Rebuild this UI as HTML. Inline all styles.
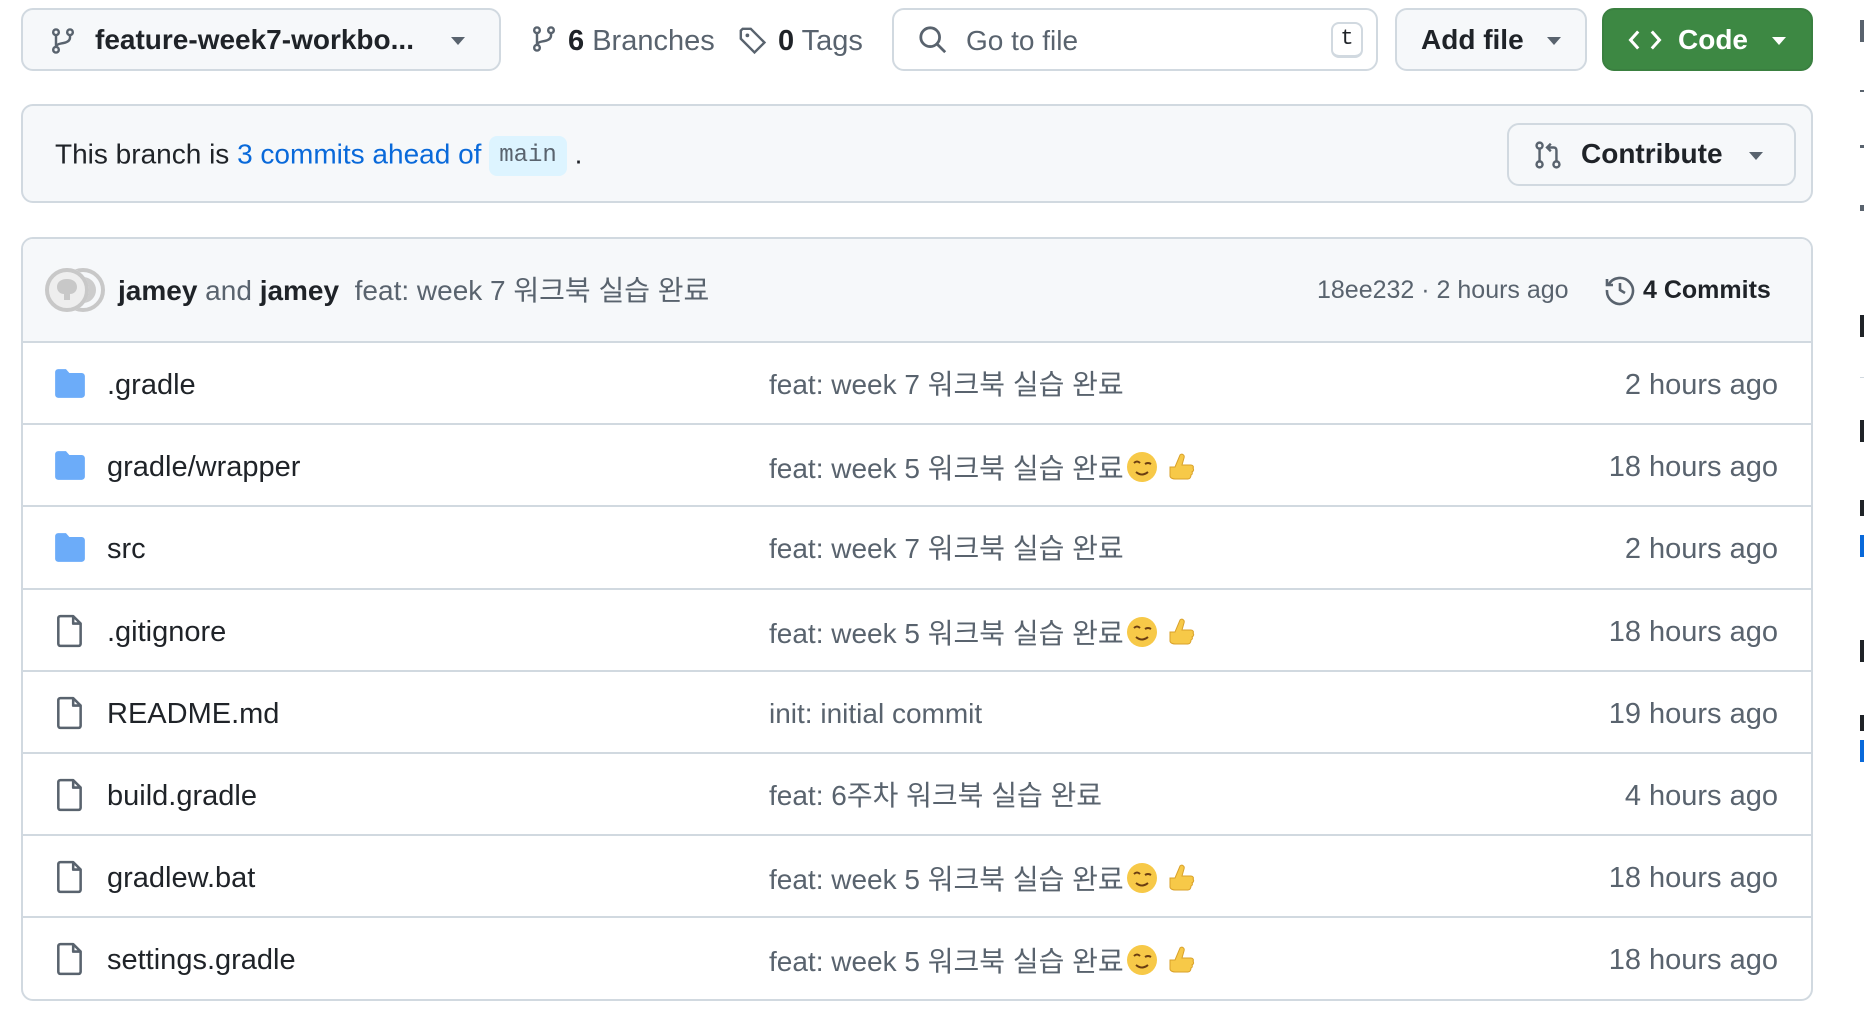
<!DOCTYPE html>
<html><head><meta charset="utf-8"><style>
*{box-sizing:border-box;margin:0;padding:0}
body{width:1864px;height:1024px;background:#fff;font-family:"Liberation Sans","Noto Sans CJK KR",sans-serif;color:#1f2328;position:relative;overflow:hidden}
.abs{position:absolute;line-height:34px}
.btn{position:absolute;border:2px solid #d1d9e0;border-radius:12px;background:#f6f8fa;display:flex;align-items:center;font-size:28px;font-weight:bold}
.caret{width:0;height:0;border-left:7px solid transparent;border-right:7px solid transparent;border-top:8px solid #59636e;position:absolute}
.row{position:absolute;left:21px;width:1792px;height:82px;border-top:2px solid #d1d9e0;font-size:29px}
.row span{line-height:34px;height:34px;white-space:nowrap}
.row .n{position:absolute;left:86px;top:25px}
.row .m{position:absolute;left:748px;top:25px;color:#59636e;font-size:28px}
.row .t{position:absolute;right:35px;top:25px;color:#59636e}
.row svg.ic{position:absolute;left:32px;top:26px}
.emo{display:inline-block;vertical-align:-6px;margin-left:2px}
</style></head><body>

<div class="btn" style="left:21px;top:8px;width:480px;height:63px">
 <svg class="abs" style="left:26px;top:16px" width="28" height="30" viewBox="0 0 16 16" fill="none" stroke="#59636e" stroke-width="1.4"><circle cx="4" cy="3" r="1.6"/><circle cx="12" cy="3" r="1.6"/><circle cx="4" cy="13" r="1.6"/><path d="M4 4.6v6.8M12 4.6v1.4c0 2-2 3-5 3.4-1.8.3-3 1-3 2.2"/></svg>
 <span class="abs" style="left:72px;top:13px">feature-week7-workbo...</span>
 <div class="caret" style="left:428px;top:27px"></div>
</div>
<svg class="abs" style="left:530px;top:24px" width="28" height="30" viewBox="0 0 16 16" fill="none" stroke="#59636e" stroke-width="1.4"><circle cx="4" cy="3" r="1.6"/><circle cx="12" cy="3" r="1.6"/><circle cx="4" cy="13" r="1.6"/><path d="M4 4.6v6.8M12 4.6v1.4c0 2-2 3-5 3.4-1.8.3-3 1-3 2.2"/></svg>
<div class="abs" style="left:568px;top:24px;font-size:29px;color:#59636e"><b style="color:#1f2328">6</b> Branches</div>
<svg class="abs" style="left:738px;top:26px" width="30" height="30" viewBox="0 0 16 16" fill="none" stroke="#59636e" stroke-width="1.3"><path d="M1.5 2.5v4.3l7.3 7.3 5.3-5.3-7.3-7.3H2.5z"/><circle cx="5" cy="5" r="1" fill="#59636e" stroke="none"/></svg>
<div class="abs" style="left:778px;top:24px;font-size:29px;color:#59636e"><b style="color:#1f2328">0</b> Tags</div>

<div class="abs" style="left:892px;top:8px;width:486px;height:63px;border:2px solid #d1d9e0;border-radius:12px;background:#fff">
 <svg class="abs" style="left:24px;top:15px" width="30" height="30" viewBox="0 0 16 16" fill="none" stroke="#59636e" stroke-width="1.5"><circle cx="6.5" cy="6.5" r="5"/><path d="M10.2 10.2l4.3 4.3"/></svg>
 <span class="abs" style="left:72px;top:14px;font-size:28px;color:#59636e">Go to file</span>
 <div class="abs" style="left:437px;top:12px;width:32px;height:36px;border:2px solid #d1d9e0;border-bottom-width:3px;border-radius:8px;font-family:'Liberation Mono',monospace;font-size:22px;color:#1f2328;text-align:center;line-height:30px">t</div>
</div>
<div class="btn" style="left:1395px;top:8px;width:192px;height:63px"><span class="abs" style="left:24px;top:13px">Add file</span><div class="caret" style="left:150px;top:27px"></div></div>
<div class="btn" style="left:1602px;top:8px;width:211px;height:63px;background:#3d8843;border-color:#3a8040;color:#fff">
 <svg class="abs" style="left:24px;top:16px" width="34" height="28" viewBox="0 0 20 16" fill="none" stroke="#fff" stroke-width="1.8"><path d="M6 3L1.5 8 6 13M14 3l4.5 5L14 13"/></svg>
 <span class="abs" style="left:74px;top:13px">Code</span>
 <div class="caret" style="left:168px;top:27px;border-top-color:#fff"></div>
</div>

<div class="abs" style="left:21px;top:104px;width:1792px;height:99px;border:2px solid #d1d9e0;border-radius:12px;background:#f6f8fa">
 <div class="abs" style="left:32px;top:30px;font-size:28px">This branch is <span style="color:#0969da">3 commits ahead of</span> <span style="display:inline-block;background:#ddf4ff;border-radius:8px;padding:0 10px;line-height:40px;font-family:'Liberation Mono',monospace;font-size:24px;color:#59636e;vertical-align:middle">main</span> .</div>
 <div class="btn" style="left:1484px;top:17px;width:289px;height:63px">
  <svg class="abs" style="left:24px;top:14px" width="30" height="32" viewBox="0 0 16 16" fill="none" stroke="#59636e" stroke-width="1.3"><circle cx="3.5" cy="3" r="1.6"/><circle cx="3.5" cy="13" r="1.6"/><circle cx="12.5" cy="13" r="1.6"/><path d="M3.5 4.6v6.8M12.5 11.4V5.5c0-1-.5-1.5-1.5-1.5H8M9.5 2L7.5 4l2 2"/></svg>
  <span class="abs" style="left:72px;top:12px">Contribute</span>
  <div class="caret" style="left:240px;top:27px"></div>
 </div>
</div>

<div class="abs" style="left:21px;top:237px;width:1792px;height:764px;border:2px solid #d1d9e0;border-radius:12px;overflow:hidden">
 <div class="abs" style="left:0;top:0;width:100%;height:104px;background:#f6f8fa"></div>
</div>
<svg class="abs" style="left:44px;top:266px" width="62" height="48" viewBox="0 0 62 48">
 <circle cx="39" cy="24" r="20" fill="#f6f8fa" stroke="#c8c8c8" stroke-width="4"/>
 <circle cx="39" cy="24" r="13" fill="#ccc"/>
 <circle cx="23" cy="24" r="22" fill="#eee"/>
 <circle cx="23" cy="24" r="20" fill="none" stroke="#c8c8c8" stroke-width="4"/>
 <path d="M13 21c0-5 4-8 10-8s10 3 10 8c0 4-3 7-7 7v6h-6v-6c-4 0-7-3-7-7z" fill="#c8c8c8"/>
</svg>
<div class="abs" style="left:118px;top:274px;font-size:28px;color:#59636e;white-space:nowrap"><b style="color:#1f2328">jamey</b> and <b style="color:#1f2328">jamey</b> &nbsp;feat: week 7 워크북 실습 완료</div>
<div class="abs" style="left:1317px;top:273px;font-size:25px;color:#59636e">18ee232 · 2 hours ago</div>
<svg class="abs" style="left:1604px;top:274px" width="32" height="32" viewBox="0 0 16 16" fill="none" stroke="#59636e" stroke-width="1.3"><path d="M2.2 5.5A6.5 6.5 0 1 1 1.5 8"/><path d="M1.5 2.5v3h3"/><path d="M8 4.5V8l2.5 1.5"/></svg>
<div class="abs" style="left:1643px;top:273px;font-size:25px;font-weight:bold">4 Commits</div>

<div class="row" style="top:341px"><svg class="ic" width="34" height="30" viewBox="0 0 16 14"><path d="M1 1.5C1 .7 1.6 0 2.5 0h3.6l1.6 1.8h5.8c.8 0 1.5.7 1.5 1.5v8.7c0 .8-.7 1.5-1.5 1.5h-11C1.6 13.5 1 12.8 1 12z" fill="#6cacf9"/></svg><span class="n">.gradle</span><span class="m">feat: week 7 워크북 실습 완료</span><span class="t">2 hours ago</span></div>
<div class="row" style="top:423px"><svg class="ic" width="34" height="30" viewBox="0 0 16 14"><path d="M1 1.5C1 .7 1.6 0 2.5 0h3.6l1.6 1.8h5.8c.8 0 1.5.7 1.5 1.5v8.7c0 .8-.7 1.5-1.5 1.5h-11C1.6 13.5 1 12.8 1 12z" fill="#6cacf9"/></svg><span class="n">gradle/wrapper</span><span class="m">feat: week 5 워크북 실습 완료<svg class="emo" width="72" height="34" viewBox="0 0 72 34"><circle cx="16" cy="17" r="15" fill="#f7c948"/><path d="M8 13q3-3 6 0M19 14q3-2 6 0M10 22q6 5 12 0" stroke="#6b3e12" stroke-width="2" fill="none"/><path d="M44 17h5l5-12c2-2 5 0 4 3l-2 7h9c2 0 3 2 2 3 1 1 1 3-1 4 1 1 0 3-1 3 0 2-1 4-3 4H49c-2 0-5-1-5-3z" fill="#f7c948" stroke="#d9a12a" stroke-width="1"/></svg></span><span class="t">18 hours ago</span></div>
<div class="row" style="top:505px"><svg class="ic" width="34" height="30" viewBox="0 0 16 14"><path d="M1 1.5C1 .7 1.6 0 2.5 0h3.6l1.6 1.8h5.8c.8 0 1.5.7 1.5 1.5v8.7c0 .8-.7 1.5-1.5 1.5h-11C1.6 13.5 1 12.8 1 12z" fill="#6cacf9"/></svg><span class="n">src</span><span class="m">feat: week 7 워크북 실습 완료</span><span class="t">2 hours ago</span></div>
<div class="row" style="top:588px"><svg class="ic" width="34" height="34" viewBox="0 0 16 16" style="top:24px"><path d="M3.5 1h6l3.5 3.5v9.5c0 .6-.4 1-1 1h-8.5c-.6 0-1-.4-1-1V2c0-.6.4-1 1-1z M9.5 1v3.5H13" fill="none" stroke="#59636e" stroke-width="1.2" stroke-linejoin="round"/></svg><span class="n">.gitignore</span><span class="m">feat: week 5 워크북 실습 완료<svg class="emo" width="72" height="34" viewBox="0 0 72 34"><circle cx="16" cy="17" r="15" fill="#f7c948"/><path d="M8 13q3-3 6 0M19 14q3-2 6 0M10 22q6 5 12 0" stroke="#6b3e12" stroke-width="2" fill="none"/><path d="M44 17h5l5-12c2-2 5 0 4 3l-2 7h9c2 0 3 2 2 3 1 1 1 3-1 4 1 1 0 3-1 3 0 2-1 4-3 4H49c-2 0-5-1-5-3z" fill="#f7c948" stroke="#d9a12a" stroke-width="1"/></svg></span><span class="t">18 hours ago</span></div>
<div class="row" style="top:670px"><svg class="ic" width="34" height="34" viewBox="0 0 16 16" style="top:24px"><path d="M3.5 1h6l3.5 3.5v9.5c0 .6-.4 1-1 1h-8.5c-.6 0-1-.4-1-1V2c0-.6.4-1 1-1z M9.5 1v3.5H13" fill="none" stroke="#59636e" stroke-width="1.2" stroke-linejoin="round"/></svg><span class="n">README.md</span><span class="m">init: initial commit</span><span class="t">19 hours ago</span></div>
<div class="row" style="top:752px"><svg class="ic" width="34" height="34" viewBox="0 0 16 16" style="top:24px"><path d="M3.5 1h6l3.5 3.5v9.5c0 .6-.4 1-1 1h-8.5c-.6 0-1-.4-1-1V2c0-.6.4-1 1-1z M9.5 1v3.5H13" fill="none" stroke="#59636e" stroke-width="1.2" stroke-linejoin="round"/></svg><span class="n">build.gradle</span><span class="m">feat: 6주차 워크북 실습 완료</span><span class="t">4 hours ago</span></div>
<div class="row" style="top:834px"><svg class="ic" width="34" height="34" viewBox="0 0 16 16" style="top:24px"><path d="M3.5 1h6l3.5 3.5v9.5c0 .6-.4 1-1 1h-8.5c-.6 0-1-.4-1-1V2c0-.6.4-1 1-1z M9.5 1v3.5H13" fill="none" stroke="#59636e" stroke-width="1.2" stroke-linejoin="round"/></svg><span class="n">gradlew.bat</span><span class="m">feat: week 5 워크북 실습 완료<svg class="emo" width="72" height="34" viewBox="0 0 72 34"><circle cx="16" cy="17" r="15" fill="#f7c948"/><path d="M8 13q3-3 6 0M19 14q3-2 6 0M10 22q6 5 12 0" stroke="#6b3e12" stroke-width="2" fill="none"/><path d="M44 17h5l5-12c2-2 5 0 4 3l-2 7h9c2 0 3 2 2 3 1 1 1 3-1 4 1 1 0 3-1 3 0 2-1 4-3 4H49c-2 0-5-1-5-3z" fill="#f7c948" stroke="#d9a12a" stroke-width="1"/></svg></span><span class="t">18 hours ago</span></div>
<div class="row" style="top:916px"><svg class="ic" width="34" height="34" viewBox="0 0 16 16" style="top:24px"><path d="M3.5 1h6l3.5 3.5v9.5c0 .6-.4 1-1 1h-8.5c-.6 0-1-.4-1-1V2c0-.6.4-1 1-1z M9.5 1v3.5H13" fill="none" stroke="#59636e" stroke-width="1.2" stroke-linejoin="round"/></svg><span class="n">settings.gradle</span><span class="m">feat: week 5 워크북 실습 완료<svg class="emo" width="72" height="34" viewBox="0 0 72 34"><circle cx="16" cy="17" r="15" fill="#f7c948"/><path d="M8 13q3-3 6 0M19 14q3-2 6 0M10 22q6 5 12 0" stroke="#6b3e12" stroke-width="2" fill="none"/><path d="M44 17h5l5-12c2-2 5 0 4 3l-2 7h9c2 0 3 2 2 3 1 1 1 3-1 4 1 1 0 3-1 3 0 2-1 4-3 4H49c-2 0-5-1-5-3z" fill="#f7c948" stroke="#d9a12a" stroke-width="1"/></svg></span><span class="t">18 hours ago</span></div>

<div class="abs" style="left:1860px;top:20px;width:4px;height:22px;background:#59636e"></div>
<div class="abs" style="left:1860px;top:90px;width:4px;height:2px;background:#59636e"></div>
<div class="abs" style="left:1860px;top:145px;width:4px;height:3px;background:#59636e"></div>
<div class="abs" style="left:1860px;top:205px;width:4px;height:6px;background:#59636e"></div>
<div class="abs" style="left:1860px;top:315px;width:4px;height:22px;background:#1f2328"></div>
<div class="abs" style="left:1860px;top:377px;width:4px;height:1px;background:#d1d9e0"></div>
<div class="abs" style="left:1860px;top:420px;width:4px;height:22px;background:#1f2328"></div>
<div class="abs" style="left:1860px;top:500px;width:4px;height:16px;background:#1f2328"></div>
<div class="abs" style="left:1860px;top:535px;width:4px;height:22px;background:#0969da"></div>
<div class="abs" style="left:1860px;top:640px;width:4px;height:22px;background:#1f2328"></div>
<div class="abs" style="left:1860px;top:715px;width:4px;height:16px;background:#1f2328"></div>
<div class="abs" style="left:1860px;top:740px;width:4px;height:22px;background:#0969da"></div>
</body></html>
